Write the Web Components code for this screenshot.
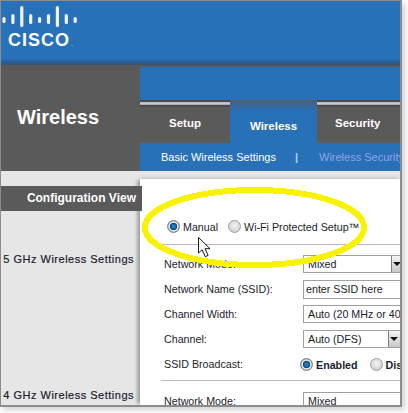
<!DOCTYPE html>
<html>
<head>
<meta charset="utf-8">
<style>
  html, body { margin: 0; background: #fff; }
  body { font-family: "Liberation Sans", Arial, sans-serif; width: 408px; height: 413px; overflow: hidden; }
</style>
</head>
<body>
<router-page>
  <cisco-logo slot="logo"></cisco-logo>
  <h1 slot="title" style="margin:0;font:bold 20px/24px 'Liberation Sans',sans-serif;color:#fff">Wireless</h1>
  <tab-nav slot="nav"></tab-nav>
  <side-menu slot="side"></side-menu>
  <wifi-form slot="form"></wifi-form>
</router-page>

<script>
class EzElement extends HTMLElement {
  get stylez () { return `:host {display: block}`; }
  constructor () {
    super();
    this.shadow = this.attachShadow({ mode: 'open' });
  }
  connectedCallback () {
    this.shadow.innerHTML = `<style>${this.stylez}</style>${this.render()}`;
  }
  render () { return ''; }
}

class RouterPage extends EzElement {
  get stylez () {
    return `
    :host { display: block; position: relative; width: 402px; height: 407px; box-sizing: border-box;
      border: 1px solid #8c8c8c; border-width: 1px 2px 2px 1px; box-shadow: 3px 3px 6px rgba(0,0,0,.18); background: #e6e6e6; }
    .clip { width: 100%; height: 100%; overflow: hidden; display: flex; flex-direction: column; }
    header { height: 64px; flex: none; box-sizing: border-box;
      background: linear-gradient(#2870b8 0, #2870b8 58px, #24649f 60px, #2a5b8e 62px, #3d5166 64px); }
    .top { flex: none; display: grid; grid-template-columns: 139px 1fr; height: 106px; background: #5a5a5a; }
    .title { padding: 40px 0 0 16px; }
    .body { flex: 1; min-height: 0; display: grid; grid-template-columns: 139px 1fr; }
    .paper { margin-top: 8px; background: #fff; box-shadow: -4px 0 3px -1px #a4a4a4, 0 -3px 3px -1px #cfcfcf;
      min-width: 0; overflow: hidden; }
    `;
  }
  render () {
    return `<div class="clip">
      <header><slot name="logo"></slot></header>
      <div class="top"><div class="title"><slot name="title"></slot></div><slot name="nav"></slot></div>
      <div class="body"><slot name="side"></slot><div class="paper"><slot name="form"></slot></div></div>
    </div>
    <svg style="position:absolute;left:-1px;top:-1px" width="400" height="405" viewBox="0 0 400 405" shape-rendering="crispEdges">
      <ellipse cx="254.5" cy="227.5" rx="109.5" ry="37.5" fill="none" stroke="#f9f200" stroke-width="6"/>
      <path d="M198.5 237.5V253l3.6-3.3 3.2 7 2.8-1.3-3.1-6.7h5z" fill="#fff" stroke="#000" stroke-width=".9" shape-rendering="auto"/>
    </svg>`;
  }
}

class CiscoLogo extends EzElement {
  get stylez () {
    return `
    :host { display: block; color: #fff; padding: 5px 0 0 0; }
    svg { display: block; }
    div { font: bold 18px/14px "Liberation Sans", sans-serif; letter-spacing: 1px; margin: 4px 0 0 7px; white-space: nowrap; }
    small { font-size: 8px; font-weight: normal; letter-spacing: 0; opacity: .6; margin-left: 1px; }
    `;
  }
  render () {
    const heights = [[11,6],[8,10],[0,21],[8,10],[11,6],[8,10],[0,21],[8,10],[11,6]];
    return `<svg width="80" height="23" viewBox="0 0 80 23" fill="#fff">
      ${heights.map(([y, h], i) => `<rect x="${1.4 + 8.9 * i}" y="${y}" width="3.2" height="${h}" rx="1.6" opacity=".92"/>`).join('')}
    </svg><div>CISCO<small>.</small></div>`;
  }
}

class TabNav extends EzElement {
  get stylez () {
    return `
    :host { display: block; color: #fff; font-size: 11px; min-width: 0; overflow: hidden; padding-top: 2px; }
    .banner { height: 33px; background: #2870b8; }
    .tabs { display: grid; grid-template-columns: 90px 87px 1fr; height: 43px; font-weight: bold; font-size: 11.5px; }
    .tab { box-sizing: border-box; padding-top: 17px; text-align: center;
      background: linear-gradient(#4a4a4a 0 2px, #9b9bac 2px, #d8d8dc 3px, #a0a0a8 5px, #444 5px, #5a5a5a 8px); }
    .tab.on { padding-top: 20px; background: linear-gradient(#4f5f70 0, #2f6ba8 8px, #2870b8 12px); }
    .tab.last { text-align: left; padding-left: 18px; }
    .sub { display: flex; height: 28px; align-items: center; background: #2870b8; padding-left: 21px; white-space: nowrap; }
    .sep { margin: 0 21px 0 19px; color: #a8d8f0; font-weight: bold; }
    .off { color: #93a2e6; }
    `;
  }
  render () {
    return `<div class="banner"></div>
    <div class="tabs">
      <div class="tab">Setup</div>
      <div class="tab on">Wireless</div>
      <div class="tab last">Security</div>
    </div>
    <div class="sub"><span>Basic Wireless Settings</span><span class="sep">|</span><span class="off">Wireless Security</span></div>`;
  }
}

class SideMenu extends EzElement {
  get stylez () {
    return `
    :host { display: block; position: relative; z-index: 1; font-size: 12px; color: #1c1c2c; text-align: right; }
    .band { margin: 15px -2px 0 0; height: 25px; line-height: 25px; background: #5a5a5a; color: #fff; font-weight: bold; padding-right: 6px; }
    p { margin: 40px 6px 0 0; font-size: 11px; line-height: 16px; letter-spacing: .5px; white-space: nowrap; -webkit-text-stroke: .2px #1c1c2c; }
    p + p { margin-top: 120px; }
    `;
  }
  render () {
    return `<div class="band">Configuration View</div>
    <p>5 GHz Wireless Settings</p>
    <p>4 GHz Wireless Settings</p>`;
  }
}

class RadioDot extends EzElement {
  get stylez () {
    return `
    :host { display: inline-block; width: 13px; height: 13px; flex: none; border-radius: 50%; box-sizing: border-box;
      border: 1px solid #a0a0a0; background: radial-gradient(circle at 50% 40%, #f4f4f4 0, #d8d8d8 60%, #b8b8b8 100%); }
    :host([checked]) { border-color: #7c8288; background: radial-gradient(circle closest-side, #2a92d4 0, #0f66a8 42%, #1d4468 62%, #d4d8dc 72%, #eef0f2 84%, #9aa0a6 100%); }
    `;
  }
}

class FormRow extends EzElement {
  get stylez () {
    return `
    :host { display: flex; align-items: center; height: 18px; font-size: 10.7px; color: #1c1c2c; white-space: nowrap; }
    span { width: 139px; flex: none; }
    `;
  }
  render () { return `<span>${this.getAttribute('label')}</span><slot></slot>`; }
}

class FieldBox extends EzElement {
  get stylez () {
    return `
    :host { display: flex; flex: none; box-sizing: border-box; height: 18px; border: 1px solid #a0a0a0; background: #fff;
      align-items: center; padding-left: 4px; font-size: 10.7px; color: #1c1c2c; white-space: nowrap; }
    i { display: flex; align-items: center; justify-content: center; margin-left: auto; width: 16px; height: 16px; flex: none;
      background: linear-gradient(#f4f4f4, #c8c8c8); border-left: 1px solid #808080; box-sizing: border-box; }
    i::after { content: ""; border: 4px solid transparent; border-top: 4px solid #111; border-bottom: 0; margin-left: -6px; }
    `;
  }
  render () {
    return `<slot></slot>${this.hasAttribute('arrow') ? '<i></i>' : ''}`;
  }
}

class WifiForm extends EzElement {
  get stylez () {
    return `
    :host { display: block; font-size: 10.7px; color: #1c1c2c; white-space: nowrap; }
    .mode { display: flex; align-items: center; height: 18px; margin-top: 38px; padding-left: 27px; }
    .mode span { margin: 2px 10px 0 3px; }
    hr { margin: 0 0 0 21px; height: 1px; border: 0; background: #b4b4e2; }
    .rows { padding-left: 24px; }
    form-row { margin-bottom: 7px; }
    b { margin: 2px 12px 0 3px; }
    `;
  }
  render () {
    return `<div class="mode">
      <radio-dot checked></radio-dot><span>Manual</span>
      <radio-dot></radio-dot><span>Wi-Fi Protected Setup™</span>
    </div>
    <hr style="margin-top:9px">
    <div class="rows" style="padding-top:10px">
      <form-row label="Network Mode:"><field-box arrow style="width:105px">Mixed</field-box></form-row>
      <form-row label="Network Name (SSID):"><field-box style="width:120px;height:19px;padding-left:2px">enter SSID here</field-box></form-row>
      <form-row label="Channel Width:"><field-box style="width:200px">Auto (20 MHz or 40 MHz)</field-box></form-row>
      <form-row label="Channel:"><field-box arrow style="width:102px">Auto (DFS)</field-box></form-row>
      <form-row label="SSID Broadcast:"><radio-dot checked style="margin-left:-3px"></radio-dot><b>Enabled</b><radio-dot></radio-dot><b>Disabled</b></form-row>
    </div>
    <hr style="margin-top:2px">
    <div class="rows" style="padding-top:11px">
      <form-row label="Network Mode:"><field-box style="width:120px">Mixed</field-box></form-row>
    </div>`;
  }
}

customElements.define('router-page', RouterPage);
customElements.define('cisco-logo', CiscoLogo);
customElements.define('tab-nav', TabNav);
customElements.define('side-menu', SideMenu);
customElements.define('radio-dot', RadioDot);
customElements.define('form-row', FormRow);
customElements.define('field-box', FieldBox);
customElements.define('wifi-form', WifiForm);
</script>
</body>
</html>
